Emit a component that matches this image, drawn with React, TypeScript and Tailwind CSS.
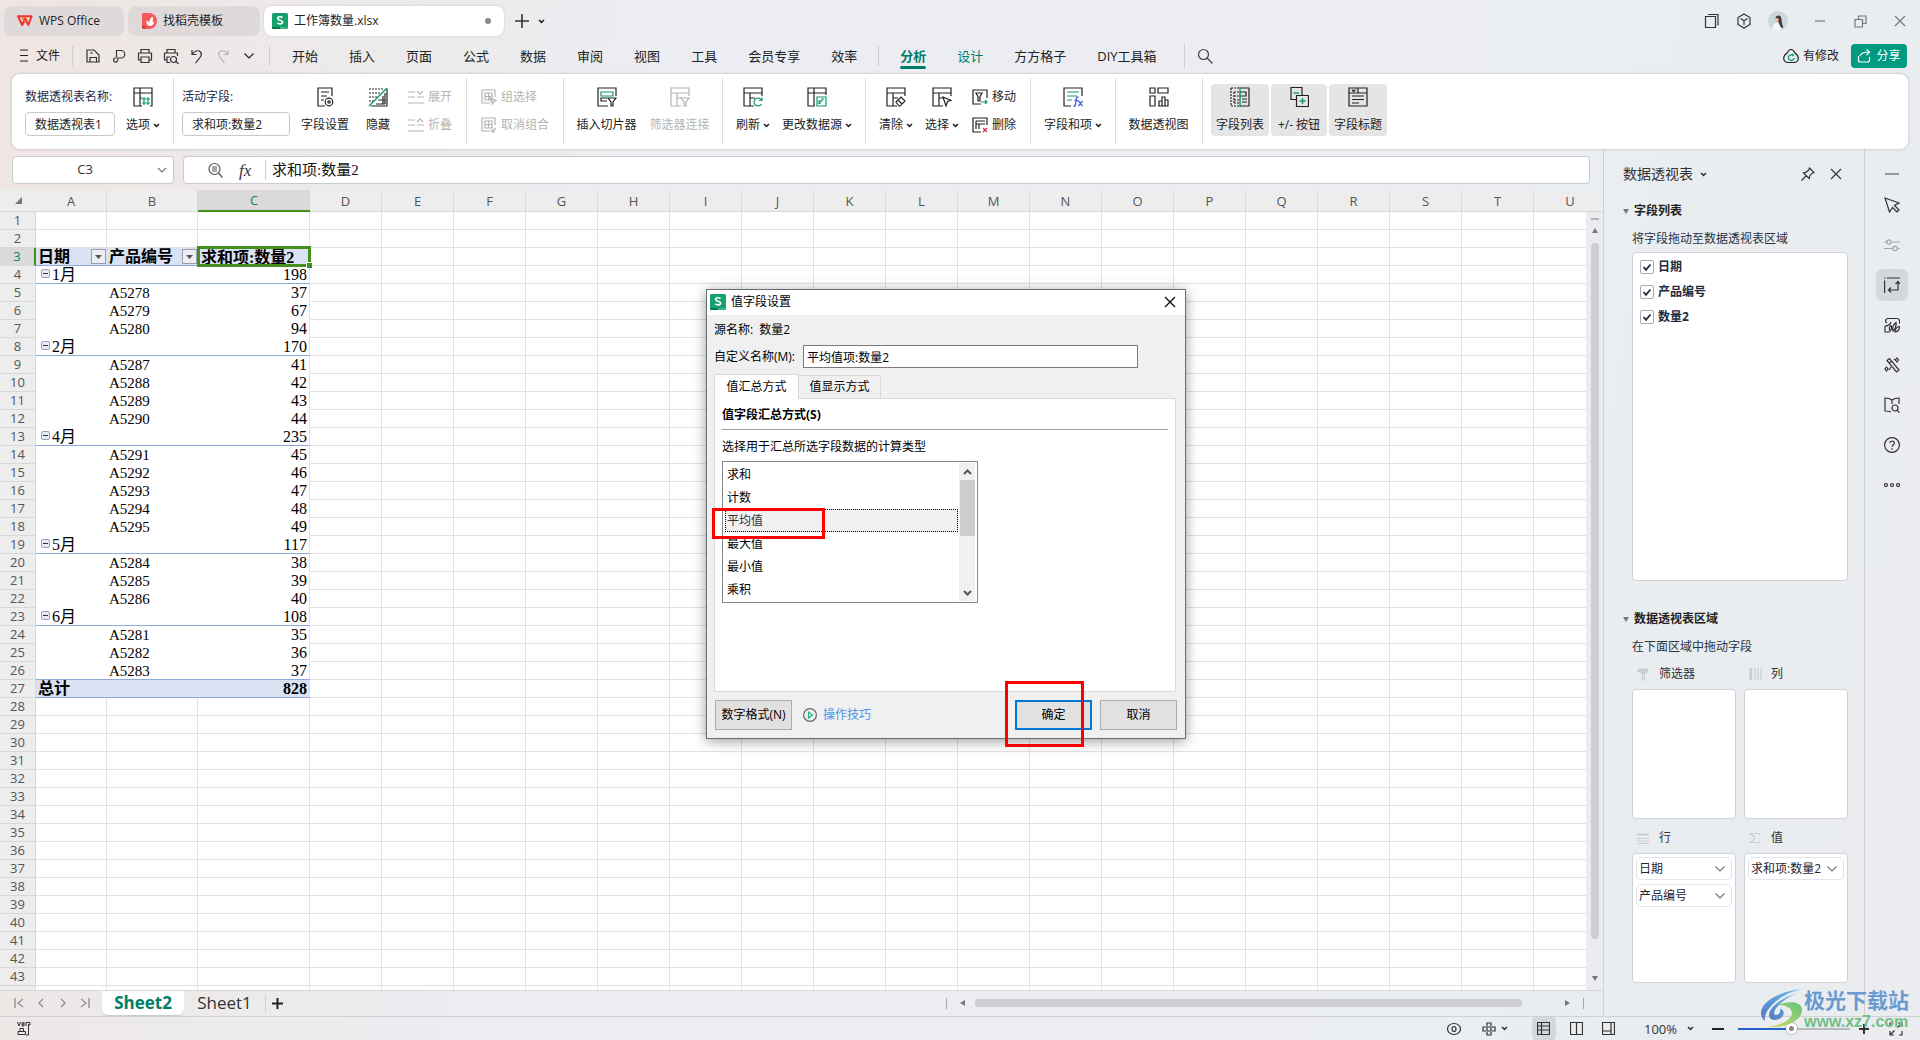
import React, { useState } from "react";

type Kids = { children?: React.ReactNode };

const UI = "font-['Open_Sans','Noto_Sans_CJK_SC',sans-serif]";
const SONG = "font-['Liberation_Serif','Noto_Sans_CJK_SC',serif]";

function Svg({ s = 20, w, h, c = "", box, children }: Kids & { s?: number; w?: number; h?: number; c?: string; box?: string }) {
  const ww = w ?? s;
  const hh = h ?? s;
  return (
    <svg width={ww} height={hh} viewBox={box ?? `0 0 ${ww} ${hh}`} fill="none" stroke="currentColor" strokeWidth="1.2" className={`shrink-0 ${c}`} aria-hidden="true">
      {children}
    </svg>
  );
}

const Caret = ({ c = "" }: { c?: string }) => (
  <Svg w={7} h={5} c={c}>
    <path d="M1 1l2.5 2.4L6 1" strokeWidth="1.5" />
  </Svg>
);

const Chevron = ({ c = "text-[#777]" }: { c?: string }) => (
  <Svg w={12} h={8} c={c}>
    <path d="M1.5 1.5L6 6l4.500-4.500" />
  </Svg>
);

const SheetLogo = () => (
  <Svg s={16}>
    <rect width="16" height="16" rx="1.500" fill="#15a06c" stroke="none" />
    <path d="M0 14h8v2H1.500A1.500 1.500 0 0 1 0 14.500z" fill="#0a7a4e" stroke="none" />
    <path d="M8 14h8v.5a1.500 1.500 0 0 1-1.500 1.500H8z" fill="#35b884" stroke="none" />
    <path d="M10.500 4.600C9.800 3.900 9 3.700 8 3.700c-1.400 0-2.400.7-2.400 1.700 0 2.500 5 1.200 5 3.700 0 1-1 1.800-2.500 1.800-1.200 0-2.100-.4-2.800-1.200" stroke="#fff" strokeWidth="1.600" />
  </Svg>
);

const VLine = ({ c = "h-4" }: { c?: string }) => <span className={`w-px shrink-0 bg-[#cfcfd2] ${c}`} />;

/* ---------- Title bar ---------- */

function TitleBar() {
  return (
    <header className="flex h-[38px] shrink-0 items-center gap-1 pl-1 pt-1 text-[12px] text-[#222]">
      <button className="flex h-[30px] w-[120px] items-center gap-[6px] rounded-lg bg-[#dfdad9] pl-[13px]">
        <Svg w={16} h={12}>
          <path d="M1 1.200h13.600L11.300 10 8.200 3.500 5.200 10z" stroke="#f0352b" strokeWidth="2" strokeLinejoin="round" />
          <path d="M5.200 1.500L8 8" stroke="#fb6a1c" strokeWidth="1.600" />
        </Svg>
        WPS Office
      </button>
      <button className="flex h-[30px] w-[132px] items-center gap-[6px] rounded-lg bg-[#dfdad9] pl-[14px]">
        <Svg w={15} h={16}>
          <path d="M0 1q0-1 1-1h6a8 8 0 0 1 0 16H2a2 2 0 0 1-2-2z" fill="#f25a5c" stroke="none" />
          <path d="M0 13h3v3H2a2 2 0 0 1-2-2z" fill="#c93b40" stroke="none" />
          <path d="M8 13c-3-.5-4-2.500-3.500-5.500C6 8 7 9 7.400 10c0-3 .8-5 3.300-6.500.8 2.500.3 4.500-1 6 .8-.8 1.500-1 2.500-1.100C12 11 10.500 13 8 13z" fill="#fff" stroke="none" />
        </Svg>
        找稻壳模板
      </button>
      <button className="flex h-[30px] w-[240px] items-center gap-[6px] rounded-lg bg-white pl-2 pr-[13px] shadow-[0_0_2px_#bbb]">
        <SheetLogo />
        工作簿数量.xlsx
        <span className="ml-auto size-[6px] rounded-full bg-[#8b8b8b]" />
      </button>
      <button aria-label="新建标签" className="ml-[3px] p-1 text-[#333]">
        <Svg s={14}>
          <path d="M7 0v14M0 7h14" strokeWidth="1.600" />
        </Svg>
      </button>
      <button aria-label="更多标签" className="p-px">
        <Caret />
      </button>
      <div className="ml-auto flex items-center text-[#333]">
        <button aria-label="窗口" className="w-8">
          <Svg s={16} c="mx-auto">
            <path d="M1.500 3.500h10v11h-10zM4 1.500h10v11" />
          </Svg>
        </button>
        <button aria-label="应用" className="w-8">
          <Svg s={16} c="mx-auto">
            <path d="M8 1l6 3.500v7L8 15l-6-3.500v-7zM4.500 5.500L8 8l3.500-2.500M8 8v4" />
          </Svg>
        </button>
        <button aria-label="账户" className="w-9">
          <Svg s={20} c="mx-auto">
            <circle cx="10" cy="10" r="10" fill="#cbd9dd" stroke="none" />
            <path d="M4 18c.5-4.500 3-6 5.500-6 2 0 3.500 2.500 3.600 7-3 1.500-6 1-9.100-1z" fill="#f2f6f7" stroke="none" />
            <path d="M7.500 7.500c0-3.500 5-4 5.700-.5.6 2.500.5 6 2.200 9.500-2 1-3-.5-3.600-2.500L9.500 9z" fill="#41363c" stroke="none" />
            <circle cx="9" cy="8.800" r="1.900" fill="#e3b9a5" stroke="none" />
          </Svg>
        </button>
        <button aria-label="最小化" className="w-12 text-[#777]">
          <Svg s={12} c="mx-auto">
            <path d="M1 6h10" />
          </Svg>
        </button>
        <button aria-label="还原" className="w-8 text-[#777]">
          <Svg s={13} c="mx-auto">
            <path d="M1 4.500h7.500V12H1zM4.500 4.500V1H12v7.500H8.500" />
          </Svg>
        </button>
        <button aria-label="关闭" className="mr-[-4px] w-12 text-[#777]">
          <Svg s={12} c="mx-auto">
            <path d="M1 1l10 10M11 1L1 11" />
          </Svg>
        </button>
      </div>
    </header>
  );
}

/* ---------- Menu row ---------- */

const quickIcons: { label: string; dim?: boolean; d: React.ReactNode }[] = [
  { label: "保存", d: <path d="M2 2h7l5 5v7H2zM5 14V9.500h6.500V14M5 5h3" /> },
  { label: "输出PDF", d: <path d="M5.500 9V2.500h4.500a3.500 3.500 0 0 1 0 7.500H4a2 2 0 1 0 1.500 4c1-.5 1.500-1.500 1.500-3" /> },
  { label: "打印", d: <path d="M4 5V1.500h8V5M4 12H1.500V5h13v7H12M4 9h8v5.500H4z" /> },
  { label: "打印预览", d: <path d="M4 5V1.500h8V5M4 12H1.500V5h13v3M4 12V9h3M4 12v2.500h3M10.500 8.500a3 3 0 1 1 0 6 3 3 0 0 1 0-6zM13 13.500l2.500 2.500" /> },
  { label: "撤销", d: <path d="M3 2v4.500h4.500M3 6.500C5 3 9 1.500 11.500 4c2.500 3-1 6.500-5 11" /> },
  { label: "重做", dim: true, d: <path d="M13 2v4.500H8.500M13 6.500C11 3 7 1.500 4.500 4c-2.500 3 1 6.500 5 11" /> },
];

function MenuRow() {
  const tab = "whitespace-nowrap leading-[20px]";
  return (
    <nav className="flex h-9 shrink-0 items-center pb-px pl-5 pr-[13px] text-[13px] text-[#222]">
      <button className="flex items-center gap-2 text-[12px]">
        <Svg w={8} h={13}>
          <path d="M0 1h8M0 6.500h8M0 12h8" />
        </Svg>
        文件
      </button>
      <VLine c="ml-[12px] mr-[7px] h-5" />
      {quickIcons.map((q) => (
        <button key={q.label} aria-label={q.label} className={q.dim ? "w-[26px] text-[#b5b5b5]" : "w-[26px] text-[#333]"}>
          <Svg s={16} c="mx-auto">
            {q.d}
          </Svg>
        </button>
      ))}
      <button aria-label="更多" className="w-[26px]">
        <Svg w={12} h={8} c="mx-auto">
          <path d="M1.500 1.500L6 6l4.500-4.500" />
        </Svg>
      </button>
      <VLine c="ml-[7px] mr-[22px] h-5" />
      <div className="flex items-center gap-[31px]">
        {["开始", "插入", "页面", "公式", "数据", "审阅", "视图", "工具", "会员专享", "效率"].map((t) => (
          <button key={t} className={tab}>
            {t}
          </button>
        ))}
      </div>
      <VLine c="mx-[21px] h-5" />
      <div className="flex items-center gap-[31px]">
        <button className={`${tab} relative font-bold text-[#007d6a] after:absolute after:inset-x-0 after:-bottom-[3px] after:h-[3px] after:rounded after:bg-[#007d6a]`}>分析</button>
        <button className={`${tab} text-[#007d6a]`}>设计</button>
        <button className={tab}>方方格子</button>
        <button className={tab}>DIY工具箱</button>
      </div>
      <VLine c="ml-[27px] mr-[12px] h-6" />
      <button aria-label="搜索" className="text-[#444]">
        <Svg s={16}>
          <circle cx="6.500" cy="6.500" r="5" />
          <path d="M10 10l5.500 5.500" />
        </Svg>
      </button>
      <button className="ml-auto flex items-center gap-1 whitespace-nowrap text-[12px]">
        <Svg s={16}>
          <path d="M8 1.500C10 1.500 11 3 12 5c2 1.500 3.300 3 3.300 5.300 0 2.500-2 4.200-4.300 4.200H5c-2.300 0-4.300-1.700-4.300-4.200C.7 8 2 6.500 4 5c1-2 2-3.500 4-3.500z" />
          <path d="M10.500 8A2.800 2.800 0 1 0 11 10M9 6l1.800 1.600" stroke="#139a6c" strokeWidth="1.400" />
        </Svg>
        有修改
      </button>
      <button className="ml-3 flex h-6 w-14 items-center justify-center gap-1 whitespace-nowrap rounded bg-[#009a83] text-[12px] text-white">
        <Svg s={15}>
          <path d="M3 8c1-3 4-4 9-4M9.500 1.500L12.500 4 9.500 7M1.500 8v4a2 2 0 0 0 2 2h7a2 2 0 0 0 2-2V9" />
        </Svg>
        分享
      </button>
    </nav>
  );
}

/* ---------- Ribbon ---------- */

const Frame = ({ cut = true }: { cut?: boolean }) => (
  <path d={cut ? "M19 9V1H1v18h10M1 6h18M7 6v13M7 11h5" : "M1 1h18v18H1zM1 6h18M7 1v18"} />
);

const ri: Record<string, React.ReactNode> = {
  options: (
    <>
      <path d="M9 19H1V1h18v18h-2M1 6h18M7 1v18M7 11h2" />
      <path d="M9 12h8M9 16h8M11 10v8M15 10v8" stroke="#139a6c" />
    </>
  ),
  field: (
    <>
      <path d="M17 9V1H3v18h7M6 5h8M6 9h6M6 13h3" />
      <circle cx="14" cy="15" r="3.800" />
      <circle cx="14" cy="15" r="1.200" />
    </>
  ),
  hide: (
    <>
      <path d="M1 2h15M1 6h11M1 10h8M1 14h5" strokeDasharray="2 1" />
      <path d="M19 2v17H3M17 6v11M15 9v8M8 17h9M10 13h7" />
      <path d="M19 1L1 19" stroke="#139a6c" strokeWidth="1.400" />
    </>
  ),
  slicer: (
    <>
      <path d="M19 9V1H1v18h10M10 11H4v3h6" />
      <path d="M4 5h12v4H4z" stroke="#139a6c" />
      <path d="M11 11h8l-3 4v4h-2v-4z" fill="#fff" />
    </>
  ),
  filterLink: (
    <>
      <Frame />
      <path d="M11 11h8l-3 4v4h-2v-4z" fill="#fff" />
    </>
  ),
  refresh: (
    <>
      <Frame />
      <path d="M18.500 13a4 4 0 1 0 0 4M19 10.500v3h-3" stroke="#139a6c" />
    </>
  ),
  source: (
    <>
      <path d="M19 8V1H1v18h7M1 6h18M7 1v18" />
      <path d="M10 10h9v9h-9zM12 17v-3h3v-2h2M13 14v3" stroke="#139a6c" />
    </>
  ),
  clear: (
    <>
      <Frame />
      <path d="M10 15l5-5 4 4-5 5h-1zM12 13l4 4" fill="#fff" />
    </>
  ),
  select: (
    <>
      <Frame />
      <path d="M11 10l8 3.500-3.500 1L14 19z" fill="#fff" />
    </>
  ),
  fx: (
    <>
      <path d="M19 9V1H1v18h7" />
      <path d="M4 5h12M4 9h10M4 13h5" stroke="#139a6c" />
      <path d="M15.500 10c-1.500-.3-2 .5-2.200 2l-1 6c-.3 1.200-.8 1.500-1.800 1.300M11.500 13.500h4M15.500 14l4 5M19.500 14l-4 5" stroke="#4a63e0" strokeWidth="1.400" />
    </>
  ),
  chart: <path d="M1 1h5v5H1zM9 1h10v5H9zM1 9h5v10H1zM10 19v-5h3v5M13 19V10h3v9M16 13h3v6H9" />,
  list: (
    <>
      <path d="M1 1h9M1 1v18h9M4 5h5M4 9h5M4 13h5M4 16h5M4 5v11" strokeDasharray="2 1" />
      <path d="M10 1h9v18h-9M10 5h6v4h-6M12 12h5M12 15h5" />
      <path d="M10 0v20" stroke="#139a6c" strokeWidth="1.500" />
    </>
  ),
  plusminus: (
    <>
      <path d="M7 12.500H2v-12h11v8M7.500 8.500h12v11h-12z" />
      <path d="M4.500 6H10M10.500 14h6M13.500 11v6" stroke="#139a6c" strokeWidth="1.400" />
    </>
  ),
  header: <path d="M1 1h18v18H1zM1 6h18M10 1v5M4 2.500l1.500 2L7.500 2.500M4 9h12M4 12.500h12M4 16h7" />,
};

function Big({ icon, label, w, caret, dim, on }: { icon: string; label: string; w: string; caret?: boolean; dim?: boolean; on?: boolean }) {
  return (
    <button className={`flex h-[52px] shrink-0 flex-col items-center gap-[10px] whitespace-nowrap rounded pt-[3px] ${w} ${dim ? "text-[#b4b4b4]" : "text-[#222]"} ${on ? "bg-[#e5e5e5]" : ""}`}>
      <Svg s={20}>{ri[icon]}</Svg>
      <span className="flex items-center gap-[3px] leading-[16px]">
        {label}
        {caret && <Caret />}
      </span>
    </button>
  );
}

function Small({ d, label, dim }: { d: React.ReactNode; label: string; dim?: boolean }) {
  return (
    <button className={`flex h-6 items-center gap-1 whitespace-nowrap ${dim ? "text-[#b4b4b4]" : "text-[#222]"}`}>
      <Svg s={16}>{d}</Svg>
      {label}
    </button>
  );
}

const Group = ({ c, children }: Kids & { c: string }) => (
  <div className={`flex h-[66px] shrink-0 items-start border-r border-[#dcdcdc] pt-[6px] ${c}`}>{children}</div>
);

function Ribbon() {
  const fieldBox = "h-6 rounded border border-[#c9c9c9] bg-white px-[9px] text-[12px]";
  const stack = "flex flex-col gap-1 pt-px";
  return (
    <section className="relative z-10 mx-3 flex h-[75px] shrink-0 rounded-lg bg-white pt-1 text-[12px] text-[#222] shadow-[0_0_3px_#b5b5b8]">
      <Group c="w-[162px] pl-[13px]">
        <label className="flex w-[90px] flex-col gap-[8px] whitespace-nowrap leading-[20px] text-[#1d2b4a]">
          <span className="h-5 pt-[3px]">数据透视表名称:</span>
          <input className={`${fieldBox} w-[90px] text-[#222]`} defaultValue="数据透视表1" />
        </label>
        <Big icon="options" label="选项" w="w-[56px]" caret />
      </Group>
      <Group c="w-[293px] pl-2">
        <label className="mr-[2px] flex w-[108px] flex-col gap-[8px] whitespace-nowrap leading-[20px] text-[#1d2b4a]">
          <span className="h-5 pt-[3px]">活动字段:</span>
          <input className={`${fieldBox} w-[108px] text-[#222]`} defaultValue="求和项:数量2" />
        </label>
        <Big icon="field" label="字段设置" w="w-[66px]" />
        <Big icon="hide" label="隐藏" w="w-[40px]" />
        <div className={`ml-[10px] ${stack}`}>
          <Small dim label="展开" d={<path d="M0 3h7M0 8h7M0 14h16M9 8h7M9 2l3 3 3-3" />} />
          <Small dim label="折叠" d={<path d="M0 3h7M0 8h7M0 14h16M9 8h7M9 5l3-3 3 3" />} />
        </div>
      </Group>
      <Group c="w-[97px] pl-[14px]">
        <div className={stack}>
          <Small dim label="组选择" d={<path d="M14 8V1H1v13h8M4 4h7v7H4zM4 7.500h7M7.500 4v7M9 9l6 2.500-2.500 1-1 2.500z" />} />
          <Small dim label="取消组合" d={<path d="M14 8V1H1v13h8M4 4h7v7H4zM4 7.500h7M7.500 4v7M11 15l4-4M11 12v3h3" />} />
        </div>
      </Group>
      <Group c="w-[159px] pl-[6px]">
        <Big icon="slicer" label="插入切片器" w="w-[73px]" />
        <Big icon="filterLink" label="筛选器连接" w="w-[73px]" dim />
      </Group>
      <Group c="w-[143px] pl-[7px]">
        <Big icon="refresh" label="刷新" w="w-[46px]" caret />
        <Big icon="source" label="更改数据源" w="w-[82px]" caret />
      </Group>
      <Group c="w-[165px] pl-[7px]">
        <Big icon="clear" label="清除" w="w-[46px]" caret />
        <Big icon="select" label="选择" w="w-[46px]" caret />
        <div className={`ml-[7px] ${stack}`}>
          <Small label="移动" d={<><path d="M15 9V1H1v14h8M4 4h6L8 7.500V12H6V7.500z" /><path d="M9 13h6M13 11l2 2-2 2" stroke="#139a6c" /></>} />
          <Small label="删除" d={<><path d="M15 8V1H1v14h8M4 4h9M4 4v8M4 7h9M7 7v5" /><path d="M11 11l4 4M15 11l-4 4" stroke="#d32f4b" strokeWidth="1.400" /></>} />
        </div>
      </Group>
      <Group c="w-[85px] pl-[7px]">
        <Big icon="fx" label="字段和项" w="w-[70px]" caret />
      </Group>
      <Group c="w-[87px] pl-[6px]">
        <Big icon="chart" label="数据透视图" w="w-[73px]" />
      </Group>
      <div className="flex gap-[2px] pl-[8px] pt-[6px]">
        <Big icon="list" label="字段列表" w="w-[58px]" on />
        <Big icon="plusminus" label="+/- 按钮" w="w-[56px]" on />
        <Big icon="header" label="字段标题" w="w-[58px]" on />
      </div>
    </section>
  );
}

/* ---------- Formula bar ---------- */

function FormulaBar() {
  return (
    <div className="flex h-[41px] shrink-0 gap-[9px] pb-[6px] pl-3 pr-[13px] pt-[7px]">
      <div className="flex w-[162px] items-center rounded border border-[#c8cacb] bg-white pr-[6px]">
        <input aria-label="名称框" defaultValue="C3" className="w-full min-w-0 text-center text-[13px] text-[#333]" />
        <Svg w={10} h={7} c="text-[#777]">
          <path d="M1 1l4 4 4-4" />
        </Svg>
      </div>
      <div className="flex flex-1 items-center rounded border border-[#c8cacb] bg-white pl-[23px]">
        <Svg s={16} c="text-[#555]">
          <circle cx="7.500" cy="7" r="5.500" />
          <path d="M5 7h5M5 5h5M5 9h5M11.500 11l4 4.500" />
        </Svg>
        <span className="ml-[16px] w-5 font-['Liberation_Serif',serif] text-[17px] italic leading-none text-[#333]">fx</span>
        <VLine c="mx-[6px] h-5" />
        <input aria-label="编辑栏" defaultValue="求和项:数量2" className={`h-6 min-w-0 flex-1 pb-[3px] text-[15px] text-[#111] ${SONG}`} />
      </div>
    </div>
  );
}

/* ---------- Grid ---------- */

type Row = { a?: string; b?: string; c?: number };
const groups: [string, number, [string, number][]][] = [
  ["1月", 198, [["A5278", 37], ["A5279", 67], ["A5280", 94]]],
  ["2月", 170, [["A5287", 41], ["A5288", 42], ["A5289", 43], ["A5290", 44]]],
  ["4月", 235, [["A5291", 45], ["A5292", 46], ["A5293", 47], ["A5294", 48], ["A5295", 49]]],
  ["5月", 117, [["A5284", 38], ["A5285", 39], ["A5286", 40]]],
  ["6月", 108, [["A5281", 35], ["A5282", 36], ["A5283", 37]]],
];
const pivot: Record<number, Row> = {};
let cursor = 4;
groups.forEach(([a, c, items]) => {
  pivot[cursor++] = { a, c };
  items.forEach(([b, v]) => {
    pivot[cursor++] = { b, c: v };
  });
});

const letters = "ABCDEFGHIJKLMNOPQRSTU".split("");
const rest = letters.slice(3);

const FilterButton = ({ label }: { label: string }) => (
  <button aria-label={label} className="flex h-[15px] w-[15px] shrink-0 items-center justify-center border border-[#9a9dac] bg-[#eceef3]">
    <Svg w={7} h={4}>
      <path d="M0 0h7L3.500 4z" fill="#555" stroke="none" />
    </Svg>
  </button>
);

function PivotCells({ n }: { n: number }) {
  const base = "h-[18px] overflow-hidden whitespace-nowrap p-0 leading-[17px] text-[16px] text-black border-b";
  if (n === 3) {
    const head = `${base} border-[#8ea9db] bg-[#d9e1f2] font-bold`;
    return (
      <>
        <td className={head}>
          <div className="flex h-[17px] items-center justify-between pl-[2px] pr-px">
            日期
            <FilterButton label="筛选日期" />
          </div>
        </td>
        <td className={head}>
          <div className="flex h-[17px] items-center justify-between pl-[2px] pr-px">
            产品编号
            <FilterButton label="筛选产品编号" />
          </div>
        </td>
        <td className="relative h-[18px] whitespace-nowrap bg-[#d9e1f2] p-0 pl-[3px] text-[16px] font-bold leading-[17px] text-black">
          求和项:数量2
          <span className="absolute -inset-x-px -bottom-px -top-[2px] border-[3px] border-[#43901e]" />
          <span className="absolute -bottom-[2px] -right-[2px] size-[6px] border-l border-t border-white bg-[#43901e]" />
        </td>
      </>
    );
  }
  if (n === 27) {
    const total = `${base} border-[#8ea9db] bg-[#d9e1f2] font-bold`;
    return (
      <>
        <td className={`${total} pl-[2px]`}>总计</td>
        <td className={total} />
        <td className={`${total} pr-[3px] text-right`}>828</td>
      </>
    );
  }
  const r = pivot[n];
  const line = r.a || n === 26 ? "border-[#8ea9db]" : "border-white";
  return (
    <>
      <td className={`${base} ${line}`}>
        {r.a && (
          <div className="flex h-[17px] items-center gap-[2px] pl-[5px]">
            <button aria-label="折叠" className="mb-[2px] flex size-[9px] items-center justify-center rounded-xs border border-[#93a4c4] bg-[#e6ebf5]">
              <span className="h-px w-[5px] bg-[#333]" />
            </button>
            {r.a}
          </div>
        )}
      </td>
      <td className={`${base} ${line} pl-[2px]`}>{r.b && <span className="block h-[17px] text-[15px] leading-[18px]">{r.b}</span>}</td>
      <td className={`${base} ${line} border-r !border-r-[#e1e1e1] pr-[2px] text-right`}>{r.c}</td>
    </>
  );
}

function Grid() {
  const rows = Array.from({ length: 44 }, (_, i) => i + 1);
  const cell = "h-[18px] border-b border-r border-[#e1e1e1] p-0";
  const head = "h-[22px] border-b bg-[#ededed] p-0 font-normal";
  return (
    <div className="flex min-h-0 flex-1">
      <div className="min-w-0 flex-1 overflow-hidden bg-white">
        <table className="w-full table-fixed border-separate border-spacing-0">
          <colgroup>
            <col className="w-[36px]" />
            <col className="w-[71px]" />
            <col className="w-[91px]" />
            <col className="w-[112px]" />
            {rest.map((l) => (
              <col key={l} className={l === "U" ? "" : "w-[72px]"} />
            ))}
          </colgroup>
          <thead>
            <tr className="text-[13px] leading-[20px] text-[#555]">
              <th className={`${head} border-[#d8d8d8]`}>
                <Svg w={7} h={7} c="ml-[15px]">
                  <path d="M7 0v7H0z" fill="#777" stroke="none" />
                </Svg>
              </th>
              {letters.map((l) => (
                <th
                  key={l}
                  scope="col"
                  className={
                    l === "C"
                      ? "h-[22px] border-b-2 border-[#43901e] bg-[#dadada] p-0 font-normal text-[#0a8070]"
                      : l === "U"
                        ? `${head} border-[#d8d8d8] pl-5`
                        : `${head} border-r border-[#d8d8d8]`
                  }
                >
                  {l}
                </th>
              ))}
            </tr>
          </thead>
          <tbody className={SONG}>
            {rows.map((n) => (
              <tr key={n}>
                <th
                  scope="row"
                  className={`h-[18px] border-b border-r p-0 text-[13px] font-normal leading-[17px] ${UI} ${
                    n === 3 ? "border-b-[#d8d8d8] border-r-2 border-r-[#43901e] bg-[#dadada] text-[#0a8070]" : "border-[#d8d8d8] bg-[#ededed] text-[#555]"
                  }`}
                >
                  {n < 44 && n}
                </th>
                {n >= 3 && n <= 27 ? (
                  <PivotCells n={n} />
                ) : (
                  <>
                    <td className={cell} />
                    <td className={cell} />
                    <td className={cell} />
                  </>
                )}
                {rest.map((l) => (
                  <td key={l} className={l === "U" ? "h-[18px] border-b border-[#e1e1e1] p-0" : cell} />
                ))}
              </tr>
            ))}
          </tbody>
        </table>
      </div>
      <div className="flex w-[17px] shrink-0 flex-col items-center bg-[#ebecf0]">
        <div className="h-[22px] w-full shrink-0 border-b border-[#d8d8d8] bg-[#ededed]" />
        <span className="mt-[6px] h-[2px] w-2 shrink-0 bg-[#b5b5b8]" />
        <Svg w={6} h={5} c="mt-[8px]">
          <path d="M3 0l3 5H0z" fill="#777" stroke="none" />
        </Svg>
        <div className="mt-[10px] w-2 flex-1 rounded-full bg-[#cdced2]" />
        <Svg w={6} h={5} c="mb-[9px] mt-[37px]">
          <path d="M3 5l3-5H0z" fill="#777" stroke="none" />
        </Svg>
      </div>
    </div>
  );
}

function SheetTabs() {
  return (
    <div className="flex h-[26px] shrink-0 items-start border-t border-[#d6d7da] text-[#999]">
      <div className="flex h-[24px] w-[102px] items-center gap-[12px] pl-[14px]">
        {["M1 0v10M9 1L4 5l5 4", "M7 1L3 5l4 4", "M3 1l4 4-4 4", "M9 0v10M1 1l5 4-5 4"].map((d, i) => (
          <button key={d} aria-label={["第一张", "上一张", "下一张", "最后一张"][i]}>
            <Svg s={10}>
              <path d={d} strokeWidth="1.500" />
            </Svg>
          </button>
        ))}
      </div>
      <button className="h-6 w-[82px] rounded-b-md bg-white text-[17px] font-bold leading-[22px] text-[#007d6a] shadow-[0_1px_1px_#c8c8cb]">Sheet2</button>
      <button className="h-6 w-[81px] text-[17px] leading-[22px] text-[#333]">Sheet1</button>
      <VLine c="mt-[4px] h-[18px]" />
      <button aria-label="新建工作表" className="mt-[7px] pl-[6px] text-[#222]">
        <Svg s={11}>
          <path d="M5.500 0v11M0 5.500h11" strokeWidth="2" />
        </Svg>
      </button>
      <div className="ml-auto flex h-[24px] w-[41%] items-center pr-[19px]">
        <span className="h-[11px] w-px bg-[#aaa]" />
        <Svg w={5} h={6} c="ml-[13px]">
          <path d="M5 0v6L0 3z" fill="#777" stroke="none" />
        </Svg>
        <span className="ml-[10px] h-2 flex-1 rounded-full bg-[#cdced2]" />
        <Svg w={5} h={6} c="ml-[43px]">
          <path d="M0 0v6l5-3z" fill="#777" stroke="none" />
        </Svg>
        <span className="ml-[13px] h-[11px] w-px bg-[#aaa]" />
      </div>
    </div>
  );
}

/* ---------- Right panel ---------- */

const SectionTitle = ({ children }: Kids) => (
  <h3 className="flex items-center gap-[5px] font-bold leading-[18px] text-[#222]">
    <Svg w={6} h={5}>
      <path d="M0 0h6L3 5z" fill="#777" stroke="none" />
    </Svg>
    {children}
  </h3>
);

function Area({ title, icon, chips = [] }: { title: string; icon: React.ReactNode; chips?: string[] }) {
  return (
    <div className="min-w-0 flex-1">
      <div className="flex h-8 items-center gap-[9px] pl-1 pt-px text-[#cbcdd0]">
        <Svg s={14}>{icon}</Svg>
        <span className="leading-[18px] text-[#333]">{title}</span>
      </div>
      <div className="flex h-[130px] flex-col gap-1 rounded border border-[#cfd1d4] bg-white p-[3px] text-[#1f2430]">
        {chips.map((c) => (
          <button key={c} className="flex h-[23px] items-center justify-between whitespace-nowrap rounded-[5px] border border-[#e4e5ea] pl-[2px] pr-[5px]">
            {c}
            <Chevron />
          </button>
        ))}
      </div>
    </div>
  );
}

function PivotPanel() {
  return (
    <aside className="flex w-[261px] shrink-0 flex-col border-l border-[#cfd1d4] pr-4 text-[12px] text-[#333]">
      <div className="mt-[13px] flex items-center pl-[19px] leading-[24px]">
        <h2 className="text-[14px]">数据透视表</h2>
        <Caret c="ml-[7px]" />
        <button aria-label="固定" className="ml-auto">
          <Svg s={14}>
            <path d="M8.500 1l4.500 4.500-1.800.7-2.400 2.500-.6 2.800-5.700-5.700 2.800-.6L7.800 2.800zM5 9l-4.500 4.500" />
          </Svg>
        </button>
        <button aria-label="关闭面板" className="ml-[15px] mr-[6px]">
          <Svg s={12}>
            <path d="M1 1l10 10M11 1L1 11" />
          </Svg>
        </button>
      </div>
      <div className="mt-[16px] pl-[19px]">
        <SectionTitle>字段列表</SectionTitle>
      </div>
      <div className="flex min-h-0 flex-1 flex-col pl-7">
        <p className="mt-[10px] leading-[18px] text-[#2a3040]">将字段拖动至数据透视表区域</p>
        <div className="mt-[4px] flex min-h-0 flex-1 flex-col rounded border border-[#cfd1d4] bg-white pl-[7px] pt-px">
          {["日期", "产品编号", "数量2"].map((f) => (
            <label key={f} className="flex h-[25px] items-center gap-[4px] font-bold leading-[18px] text-[#222b3d]">
              <span className="relative flex size-[14px] shrink-0">
                <input type="checkbox" defaultChecked className="peer size-[14px] appearance-none rounded-xs border border-[#a9abb0] bg-white" />
                <Svg s={14} c="pointer-events-none absolute inset-0 hidden peer-checked:block">
                  <path d="M3.500 7l2.500 2.800L10.500 4.500" strokeWidth="1.800" />
                </Svg>
              </span>
              {f}
            </label>
          ))}
        </div>
      </div>
      <div className="mt-[29px] pl-[19px]">
        <SectionTitle>数据透视表区域</SectionTitle>
      </div>
      <div className="mb-[33px] flex flex-col pl-7">
        <p className="mt-[10px] leading-[18px] text-[#2a3040]">在下面区域中拖动字段</p>
        <div className="mt-px flex gap-2">
          <Area title="筛选器" icon={<path d="M1 3.500C1 1.500 3 1 7 1s6 .5 6 2.500S10.500 6 9.500 7v7h-4V7C4 6 1 5.500 1 3.500zM7.500 7v7" fill="currentColor" stroke="#e9ecf0" strokeWidth=".8" />} />
          <Area title="列" icon={<path d="M3 1v12M7 1v12M10 1v12M13 1v12M2 1v12M3.500 1v12" />} />
        </div>
        <div className="mt-[2px] flex gap-2">
          <Area title="行" icon={<path d="M1 3h12M1 4h12M1 7.500h12M1 10h12M1 12.500h12" />} chips={["日期", "产品编号"]} />
          <Area title="值" icon={<path d="M12 4V2.500H2.500L7 7l-4.500 4.500H12V10" />} chips={["求和项:数量2"]} />
        </div>
      </div>
    </aside>
  );
}

const rail: { label: string; c: string; d: React.ReactNode }[] = [
  { label: "选择", c: "text-[#333]", d: <path d="M1 1l14 5-4.500 2.500 4.500 4.500-2 2-4.500-4.500L5.500 15z" /> },
  { label: "设置", c: "text-[#a5a5a5]", d: <><path d="M0 5h3M7 5h9M0 11.500h9M13 11.500h3" /><circle cx="5" cy="5" r="2.200" /><circle cx="11" cy="11.500" r="2.200" /></> },
  { label: "透视表", c: "text-[#333] bg-[#d5d8db]", d: <path d="M.6 3.500V16M3 1h13M0 1h1.500M14 4.500v8.500H4.500M11.500 7L14 4.500l2 2.500M7 10.500L4.500 13 7 15.500" /> },
  { label: "图表", c: "text-[#333]", d: <path d="M1 9V15h5M3 5.500C1 6 1 1.500 4 1.500h9c2 0 3 2 2.500 5M1 9c3 0 5-1 6-4M6 14c-1.500-3 0-5 1-5.500 1 2 .5 4-1 5.500zM9 14c-1-4 1-7 3-8.500.5 3.500 0 6-3 8.500zM11 15c0-3 2-5 4.500-5.500 0 3-1.500 5-4.500 5.500z" /> },
  { label: "工具", c: "text-[#333]", d: <><path d="M3 3.500L5.500 1.500 15 13l-2.500 2zM5 6l3-2" /><path d="M13 1l1.500 2L13 5l-1.500-2zM2.500 10L4 12l-1.500 2L1 12zM10 2l1 1M5 13l2-3" /></> },
  { label: "搜索文档", c: "text-[#333]", d: <path d="M8 3C6 1.500 3.500 1 1 1v13c2 0 4 0 6 1M8 3c2-1.500 4-2 7-2v6M8 3v4M11 8a3 3 0 1 1 0 6 3 3 0 0 1 0-6zM13.500 13.500L15.500 16" /> },
  { label: "帮助", c: "text-[#333]", d: <><circle cx="8" cy="8" r="7.400" /><path d="M5.800 6.200c.2-1.500 1.200-2 2.300-2 1.300 0 2.200.8 2.200 2C10.300 8 8 8 8 9.800M8 11.300v1.400" /></> },
  { label: "更多", c: "text-[#333]", d: <><circle cx="2" cy="8" r="1.500" /><circle cx="8" cy="8" r="1.500" /><circle cx="14" cy="8" r="1.500" /></> },
];

function Rail() {
  return (
    <aside className="flex w-[56px] shrink-0 flex-col items-center gap-2 border-l border-[#cfd1d4] pr-px pt-[24px]">
      <span className="h-[2px] w-[14px] bg-[#999]" />
      <div className="flex flex-col gap-2 pt-[6px]">
        {rail.map((r) => (
          <button key={r.label} aria-label={r.label} className={`flex size-8 items-center justify-center rounded-md ${r.c}`}>
            <Svg s={16}>{r.d}</Svg>
          </button>
        ))}
      </div>
    </aside>
  );
}

/* ---------- Status bar ---------- */

function StatusBar() {
  const [zoom, setZoom] = useState(48);
  return (
    <footer className="flex h-6 shrink-0 items-center border-t border-[#cfd1d4] px-[17px] text-[#333]">
      <Svg s={14}>
        <path d="M.5 0l1.500 4L3.500 0M5 .5v3.500h2v-4H5M5 2h2M9 4V.5h4V3h-1.500M1 12.500V9.500h7.500v3zM3 9V6.500h3.500V9M9 13h2.500V2" strokeWidth="1" />
      </Svg>
      <div className="ml-auto flex items-center">
        <Svg s={14}>
          <ellipse cx="7" cy="7" rx="6.500" ry="5.500" />
          <ellipse cx="7" cy="7" rx="2" ry="2.500" />
        </Svg>
        <Svg s={14} c="ml-[21px]">
          <path d="M5 4V1h4v3M5 10v3h4v-3M4 5H1v4h3M10 5h3v4h-3M5 5h4v4H5z" />
        </Svg>
        <Caret c="ml-[5px]" />
        <VLine c="ml-[16px] mr-[7px]" />
        <button aria-label="普通视图" className="flex h-[23px] w-6 items-center justify-center rounded bg-[#d5d8db]">
          <Svg s={13}>
            <path d="M.5.5h12v12H.5zM.5 4h12M.5 8h12M4.500.5v12" />
          </Svg>
        </button>
        <Svg s={13} c="ml-[14px]">
          <path d="M.5.5h12v12H.5zM6.500.5v12" />
        </Svg>
        <Svg s={13} c="ml-[19px]">
          <path d="M.5.5h12v12H.5zM.5 9h8.500V.5M9 9.500v3" />
        </Svg>
        <VLine c="ml-[13px] mr-[15px]" />
        <span className="text-[13px] leading-5">100%</span>
        <Caret c="ml-[10px]" />
        <button aria-label="缩小" className="ml-[18px] h-[2px] w-[12px] bg-[#222]" />
        <input
          type="range"
          aria-label="缩放"
          value={zoom}
          onChange={(e) => setZoom(Number(e.target.value))}
          className="ml-[14px] h-[2px] w-[112px] appearance-none [&::-webkit-slider-thumb]:size-[11px] [&::-webkit-slider-thumb]:appearance-none [&::-webkit-slider-thumb]:rounded-full [&::-webkit-slider-thumb]:border-[3px] [&::-webkit-slider-thumb]:border-white [&::-webkit-slider-thumb]:bg-[#888] [&::-webkit-slider-thumb]:shadow-[0_0_2px_#777]"
          style={{ background: `linear-gradient(to right, #1f62cc ${zoom}%, #b8babd ${zoom}%)` }}
        />
        <button aria-label="放大" className="ml-[9px]">
          <Svg s={10}>
            <path d="M5 0v10M0 5h10" strokeWidth="2" />
          </Svg>
        </button>
        <button aria-label="全屏" className="ml-[20px]">
          <Svg s={14}>
            <path d="M9 1h4v4M13 1L8.500 5.500M1 9v4h4M1 13l4.500-4.500M1 5V1h3M13 9v4h-3" />
          </Svg>
        </button>
      </div>
    </footer>
  );
}

/* ---------- Value field settings dialog ---------- */

const methods = ["求和", "计数", "平均值", "最大值", "最小值", "乘积"];

function Dialog() {
  const [picked, setPicked] = useState("平均值");
  const btn = "h-[30px] w-[77px] whitespace-nowrap bg-[#e1e1e1] leading-[26px]";
  return (
    <div role="dialog" aria-label="值字段设置" className="absolute left-[706px] top-[289px] z-20 flex h-[450px] w-[480px] flex-col border border-[#6b6e70] bg-[#f0f0f0] text-[12px] text-black shadow-[0_2px_12px_rgba(0,0,0,0.4)]">
      <div className="flex h-[25px] shrink-0 items-center gap-[5px] bg-white pb-px pl-[3px] pr-[9px]">
        <SheetLogo />
        值字段设置
        <button aria-label="关闭" className="ml-auto">
          <Svg s={12}>
            <path d="M1 1l10 10M11 1L1 11" />
          </Svg>
        </button>
      </div>
      <div className="flex min-h-0 flex-1 flex-col px-[7px] pb-[8px]">
        <p className="mt-[6px] flex gap-[6px] leading-[18px]">
          <span>源名称:</span>
          <span>数量2</span>
        </p>
        <label className="mt-[6px] flex h-[23px] items-center gap-[5px] whitespace-nowrap">
          <span className="w-[84px]">自定义名称(M):</span>
          <input defaultValue="平均值项:数量2" className="h-[23px] w-[335px] border border-[#7a7a7a] bg-white px-[3px]" />
        </label>
        <div role="tablist" className="relative z-10 -mb-px mt-[6px] flex items-end">
          <button role="tab" aria-selected="true" className="h-[25px] w-[85px] border border-b-0 border-[#d9d9d9] bg-white">
            值汇总方式
          </button>
          <button role="tab" className="h-[24px] w-[82px] border border-l-0 border-[#d9d9d9] bg-[#f0f0f0]">
            值显示方式
          </button>
        </div>
        <div className="mr-[2px] flex min-h-0 flex-1 flex-col border border-[#d9d9d9] bg-white px-[7px]">
          <h3 className="mt-[7px] border-b border-[#a0a0a0] pb-[5px] font-bold leading-[18px]">值字段汇总方式(S)</h3>
          <p className="mt-[8px] leading-[18px]">选择用于汇总所选字段数据的计算类型</p>
          <div className="mt-[5px] flex h-[142px] w-[256px] border border-[#828790] p-px pr-[2px]">
            <div role="listbox" aria-label="计算类型" className="flex flex-1 flex-col pl-px pr-px">
              {methods.map((m) => (
                <button
                  key={m}
                  role="option"
                  aria-selected={m === picked}
                  onClick={() => setPicked(m)}
                  className={`h-[23px] border pl-px text-left leading-[20px] ${m === picked ? "border-dotted border-black bg-[#f0f0f0] text-[#333]" : "border-transparent"}`}
                >
                  {m}
                </button>
              ))}
            </div>
            <div className="flex w-[16px] flex-col items-center bg-[#f0f0f0] text-[#555]">
              <Svg w={9} h={6} c="mb-[5px] mt-[6px]">
                <path d="M1 5l3.500-3.500L8 5" strokeWidth="2" />
              </Svg>
              <span className="h-[56px] w-[15px] bg-[#cdcdcd]" />
              <Svg w={9} h={6} c="mb-[5px] mt-auto">
                <path d="M1 1l3.500 3.500L8 1" strokeWidth="2" />
              </Svg>
            </div>
          </div>
        </div>
        <div className="mt-[8px] flex items-center pl-px pr-px">
          <button className={`${btn} border border-[#adadad]`}>数字格式(N)</button>
          <a href="#tips" className="ml-[11px] flex items-center gap-[6px] text-[#4c93ec]">
            <Svg s={14} c="text-[#666]">
              <circle cx="7" cy="7" r="6.400" />
              <path d="M5.500 4v6l4-3z" stroke="#1db67c" />
            </Svg>
            操作技巧
          </a>
          <button className={`${btn} ml-auto border-2 border-[#0078d7]`}>确定</button>
          <button className={`${btn} ml-2 border border-[#adadad]`}>取消</button>
        </div>
      </div>
      <span className="pointer-events-none absolute left-[5px] top-[218px] h-[31px] w-[113px] border-[3px] border-[#ff0000]" />
      <span className="pointer-events-none absolute left-[298px] top-[391px] h-[66px] w-[79px] border-[3px] border-[#ff0000]" />
    </div>
  );
}

/* ---------- Watermark ---------- */

function Watermark() {
  return (
    <div className="pointer-events-none absolute bottom-[9px] right-[10px] z-30 flex items-center">
      <svg width="44" height="42" viewBox="0 0 44 42" aria-hidden="true">
        <defs>
          <linearGradient id="wmBlue" x1="0" y1="1" x2="1" y2="0">
            <stop offset="0" stopColor="#5579c2" />
            <stop offset="1" stopColor="#62c3ee" />
          </linearGradient>
          <linearGradient id="wmGreen" x1="0" y1="1" x2="1" y2="0">
            <stop offset="0" stopColor="#d8dc62" />
            <stop offset="1" stopColor="#62c07c" />
          </linearGradient>
        </defs>
        <path d="M43 1C24 2 1 12 1 25c0 3 1.500 6 4 8C3 22 20 5 43 1z" fill="url(#wmBlue)" />
        <path d="M38 5C22 9 8 20 9 28c1 5 9 5 13 1 3-3 2-8-2-8 1 3-1 6-4 6-6-1 3-15 22-22z" fill="url(#wmBlue)" />
        <path d="M18 17c12-5 24-3 24 5C42 33 24 41 6 39c14-1 26-7 26-14 0-5-6-8-14-8z" fill="url(#wmGreen)" />
      </svg>
      <div className="flex w-[106px] flex-col whitespace-nowrap">
        <span className="text-[21px] font-bold leading-[26px] text-[#6a9bd0]">极光下载站</span>
        <span className="font-['Liberation_Sans',sans-serif] text-[16px] font-bold leading-[18px] text-[#72c088]">www.xz7.com</span>
      </div>
    </div>
  );
}

export default function App() {
  return (
    <div className={`relative flex h-screen flex-col overflow-hidden bg-[#ebecf0] bg-[linear-gradient(100deg,#efe5e4_0%,#ecebea_18%,#ebedf2_32%,#ebedf2_70%,#e9edf0_85%,#ebecf0_100%)] ${UI}`}>
      <TitleBar />
      <MenuRow />
      <Ribbon />
      <main className="flex min-h-0 flex-1">
        <div className="flex min-w-0 flex-1 flex-col">
          <FormulaBar />
          <Grid />
          <SheetTabs />
        </div>
        <PivotPanel />
        <Rail />
      </main>
      <StatusBar />
      <Dialog />
      <Watermark />
    </div>
  );
}
